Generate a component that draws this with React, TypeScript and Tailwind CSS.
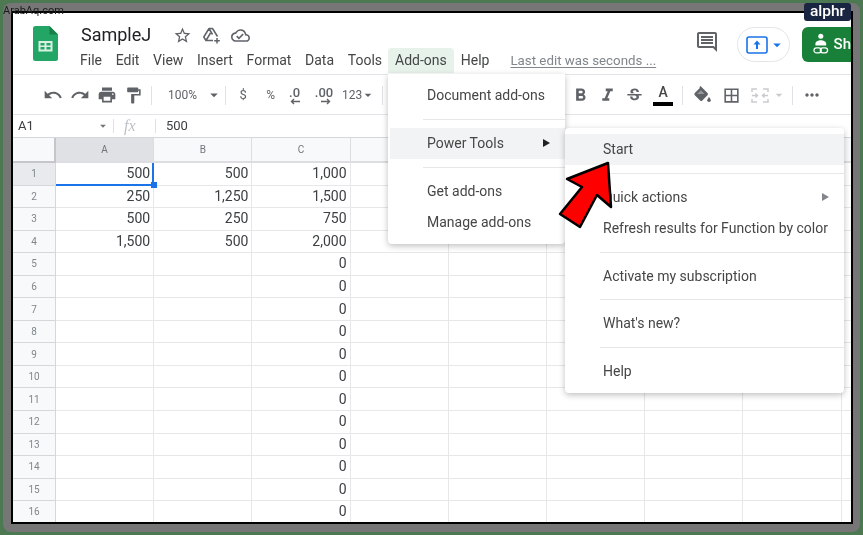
import type { ReactNode } from "react";
import {
  MdUndo,
  MdRedo,
  MdPrint,
  MdFormatPaint,
  MdFormatBold,
  MdFormatItalic,
  MdStrikethroughS,
  MdBorderAll,
  MdMoreHoriz,
  MdStarBorder,
  MdOutlineCloudDone,
  MdOutlineComment,
  MdArrowDropDown,
} from "react-icons/md";

const MENUS = ["File", "Edit", "View", "Insert", "Format", "Data", "Tools"];
const COLS = ["A", "B", "C", "", "", "", "", "", ""];

const ROWS: string[][] = [
  ["500", "500", "1,000"],
  ["250", "1,250", "1,500"],
  ["500", "250", "750"],
  ["1,500", "500", "2,000"],
];

function SheetsLogo() {
  return (
    <svg width="25" height="35" viewBox="0 0 25 35">
      <path d="M2.5 0H16.5l8.5 8.5v24a2.5 2.5 0 0 1-2.5 2.5h-20A2.5 2.5 0 0 1 0 32.5v-30A2.5 2.5 0 0 1 2.5 0z" fill="#23a566" />
      <path d="M16.5 0l8.5 8.5h-8.5z" fill="#188049" />
      <path d="M5.5 15h14v10.5h-14z" fill="#d9f0e3" />
      <path d="M7.5 17h4v2.5h-4zM13.5 17h4v2.5h-4zM7.5 21h4v2.5h-4zM13.5 21h4v2.5h-4z" fill="#23a566" />
    </svg>
  );
}

function DriveAdd() {
  return (
    <svg width="19" height="19" viewBox="0 0 19 19" fill="none" stroke="#5f6368" strokeWidth="1.5" strokeLinejoin="round">
      <path d="M7 2.5h3.5l5 8M7 2.5L1.8 11l2.2 3.5h7M7 2.5l3.5 6M4 14.5L8.5 7" />
      <path d="M15 12v5.5M12.2 14.8h5.6" />
    </svg>
  );
}

function FillBucket() {
  return (
    <svg width="20" height="18" viewBox="0 0 20 18" fill="#5f6368">
      <path d="M8.5 1l1-1 7 7a1.6 1.6 0 0 1 0 2.2l-5.2 5.2a1.6 1.6 0 0 1-2.2 0L3.8 9.2a1.6 1.6 0 0 1 0-2.2l5-5z" />
      <path d="M9.9 4.2L6 8h7.6z" fill="#fff" opacity="0.35" />
      <path d="M18 11s-1.8 2-1.8 3.2a1.8 1.8 0 0 0 3.6 0C19.8 13 18 11 18 11z" />
    </svg>
  );
}

function MergeCells() {
  return (
    <svg width="18" height="15" viewBox="0 0 18 15" fill="none" stroke="#c9cbce" strokeWidth="1.5">
      <path d="M1 4V1h5M12 1h5v3M1 11v3h5M12 14h5v-3" />
      <path d="M1 7.5h5M4.5 5.5l2 2-2 2M17 7.5h-5M13.5 5.5l-2 2 2 2" />
    </svg>
  );
}

function ShareIcon() {
  return (
    <svg width="16" height="24" viewBox="0 0 16 24" fill="#fff">
      <circle cx="8" cy="3" r="2.6" />
      <path d="M2.5 12.5v-2c0-2 3-3.3 5.500-3.300s5.500 1.300 5.500 3.300v2z" />
      <g fill="none" stroke="#fff" strokeWidth="1.3">
        <rect x="1" y="15" width="7.5" height="5" rx="2.5" />
        <rect x="7.5" y="15" width="7.5" height="5" rx="2.5" />
      </g>
    </svg>
  );
}

function DecimalArrow({ dir }: { dir: "left" | "right" }) {
  return (
    <svg className="absolute top-[16px]" style={dir === "left" ? { left: 4 } : { left: 7 }} width="10" height="7" viewBox="0 0 10 7" fill="none" stroke="#5f6368" strokeWidth="1.4">
      {dir === "left" ? <path d="M10 3.5H1.5M4 1L1.5 3.5 4 6" /> : <path d="M0 3.5h8.500M6 1l2.500 2.500L6 6" />}
    </svg>
  );
}

function ToolIcon({ children, w = 27 }: { children: ReactNode; w?: number }) {
  return (
    <div className="flex h-full shrink-0 items-center justify-center text-[#5f6368]" style={{ width: w }}>
      {children}
    </div>
  );
}

function ToolSep({ className = "mx-[5px]" }: { className?: string }) {
  return <div className={`h-[19px] w-px shrink-0 bg-[#dfe1e4] ${className}`} />;
}

function Header() {
  return (
    <div className="flex h-[62px] shrink-0 border-b border-[#e3e5e8]">
      <div className="ml-[20px] mt-[13px] shrink-0">
        <SheetsLogo />
      </div>
      <div className="ml-[22px] flex flex-1 flex-col">
        <div className="mt-[10px] flex h-[24px] items-center text-[#3c4043]">
          <span className="ml-[1px] text-[18px] leading-none text-[#202124]">SampleJ</span>
          <MdStarBorder className="ml-[22px] text-[#5f6368]" size={19} />
          <span className="ml-[10px]">
            <DriveAdd />
          </span>
          <MdOutlineCloudDone className="ml-[10px] text-[#5f6368]" size={19} />
        </div>
        <div className="mt-[1px] flex h-[25px] items-center text-[14px] text-[#444746]">
          <div className="flex">
            {MENUS.map((m) => (
              <span key={m} className="mr-[13.7px]">
                {m}
              </span>
            ))}
          </div>
          <span className="-ml-[7.7px] flex h-[25px] items-center rounded-t bg-[#e6f2ea] px-[7px]">Add-ons</span>
          <span className="ml-[7px]">Help</span>
          <span className="ml-[21px] text-[13.3px] text-[#80868b] underline underline-offset-2">Last edit was seconds ...</span>
        </div>
      </div>
      <div className="flex items-start">
        <MdOutlineComment className="mt-[17px] text-[#5f6368]" size={24} />
        <div className="ml-[18px] mt-[14px] flex h-[35px] w-[53px] items-center justify-center rounded-full border border-[#e3e5e8]">
          <svg width="22" height="18" viewBox="0 0 22 18">
            <rect x="1" y="1" width="20" height="16" rx="2" fill="none" stroke="#1a73e8" strokeWidth="1.6" />
            <path d="M11 4.5l3.5 4H12V13h-2V8.5H7.5z" fill="#1a73e8" />
          </svg>
          <MdArrowDropDown className="-mr-[4px] text-[#1a73e8]" size={18} />
        </div>
        <div className="ml-[12px] mt-[14px] flex h-[35px] w-[49px] items-center rounded-l-md bg-[#188038] pl-[11px] text-[15px] font-medium text-white">
          <ShareIcon />
          <span className="ml-[5px]">Sh</span>
        </div>
      </div>
    </div>
  );
}

function Toolbar() {
  return (
    <div className="flex h-[40px] shrink-0 items-center border-b border-[#e3e5e8] pt-[1px] pl-[26px]">
      <ToolIcon><MdUndo size={20} /></ToolIcon>
      <ToolIcon><MdRedo size={20} /></ToolIcon>
      <ToolIcon><MdPrint size={20} /></ToolIcon>
      <ToolIcon><MdFormatPaint size={19} /></ToolIcon>
      <ToolSep className="ml-[4px] mr-[16px]" />
      <span className="text-[12px] text-[#5f6368]">100%</span>
      <MdArrowDropDown className="ml-[8px] text-[#5f6368]" size={18} />
      <ToolSep className="ml-[2px] mr-[11px]" />
      <span className="w-[12px] text-center text-[13px] text-[#5f6368]">$</span>
      <span className="ml-[15px] w-[13px] text-center text-[12px] text-[#5f6368]">%</span>
      <div className="relative ml-[9px] h-[26px] w-[17px] text-center text-[13px] leading-[22px] font-medium text-[#5f6368]">
        .0
        <DecimalArrow dir="left" />
      </div>
      <div className="relative ml-[11px] h-[26px] w-[20px] text-center text-[13px] leading-[22px] font-medium text-[#5f6368]">
        .00
        <DecimalArrow dir="right" />
      </div>
      <span className="ml-[8px] text-[12px] text-[#5f6368]">123</span>
      <MdArrowDropDown className="-ml-[2px] text-[#5f6368]" size={16} />
      <ToolSep className="ml-[6px] mr-[184px]" />
      <ToolIcon><MdFormatBold size={21} /></ToolIcon>
      <ToolIcon><MdFormatItalic size={21} /></ToolIcon>
      <ToolIcon><MdStrikethroughS size={19} /></ToolIcon>
      <div className="ml-[1px] flex w-[28px] flex-col items-center text-[#444746]">
        <span className="text-[14px] leading-[16px] font-medium">A</span>
        <div className="mt-[2px] h-[4px] w-[20px] bg-black" />
      </div>
      <ToolSep className="ml-[5px] mr-[4px]" />
      <ToolIcon><FillBucket /></ToolIcon>
      <ToolIcon w={34}><MdBorderAll size={19} /></ToolIcon>
      <div className="-ml-[2px]">
        <ToolIcon w={27}><MergeCells /></ToolIcon>
      </div>
      <MdArrowDropDown className="-ml-[2px] text-[#c9cbce]" size={16} />
      <ToolSep className="ml-[5px] mr-[5px]" />
      <ToolIcon><MdMoreHoriz size={20} /></ToolIcon>
    </div>
  );
}

function FormulaBar() {
  return (
    <div className="flex h-[23px] shrink-0 items-center border-b border-[#d5d7da] text-[13px] text-[#3c4043]">
      <span className="ml-[5px] w-[78px]">A1</span>
      <MdArrowDropDown className="text-[#70757a]" size={14} />
      <div className="ml-[3px] h-[14px] w-px bg-[#dfe1e4]" />
      <span
        className="ml-[10px] w-[31px] text-[16px] text-[#bdc1c6] italic"
        style={{ fontFamily: '"Liberation Serif", serif' }}
      >
        fx
      </span>
      <div className="h-[14px] w-px bg-[#dfe1e4]" />
      <span className="ml-[10px]">500</span>
    </div>
  );
}

function Grid() {
  const rows = Array.from({ length: 16 }, (_, i) => i);
  return (
    <div className="relative flex-1 overflow-hidden">
      <div className="grid grid-cols-[43px_repeat(8,98.2px)_11px] grid-rows-[25px_repeat(16,22.55px)]">
        <div className="border-r-[2px] border-b-[2px] border-[#c4c6c9] bg-[#f8f9fa]" />
        {COLS.map((c, i) => (
          <div
            key={i}
            className={`flex items-center justify-center border-r border-b-[2px] border-[#dcdee1] text-[10px] text-[#70757a] ${i === 0 ? "bg-[#dfe1e5]" : "bg-[#f8f9fa]"}`}
          >
            {c}
          </div>
        ))}
        {rows.map((r) => (
          <div key={r} className="contents">
            <div
              className={`flex items-center justify-center border-r border-b border-[#d5d7da] text-[10px] text-[#80868b] ${r === 0 ? "bg-[#e8eaed]" : "bg-[#f8f9fa]"}`}
            >
              {r + 1}
            </div>
            {COLS.map((_, c) => (
              <div
                key={c}
                className="flex items-center justify-end border-r border-b border-[#e6e7e9] pr-[3px] text-[14px] text-[#3c4043]"
              >
                {c < 3 ? (ROWS[r]?.[c] ?? (c === 2 ? "0" : "")) : ""}
              </div>
            ))}
          </div>
        ))}
      </div>
      {/* active cell A1 */}
      <div className="absolute left-[43px] top-[25px] h-[23px] w-[98px] border-r-2 border-b-2 border-[#1a73e8]" />
      <div className="absolute left-[138px] top-[44px] h-[6px] w-[6px] bg-[#1a73e8]" />
    </div>
  );
}

function MenuRow({ label, active, arrow, pad = "pl-[39px]" }: { label: string; active?: boolean; arrow?: string; pad?: string }) {
  return (
    <div className={`flex h-[31px] items-center justify-between ${pad} ${active ? "bg-[#f1f3f4]" : ""}`}>
      <span>{label}</span>
      {arrow && (
        <span className="mr-[15px] h-0 w-0 border-y-[4px] border-l-[7px] border-y-transparent" style={{ borderLeftColor: arrow }} />
      )}
    </div>
  );
}

function MenuSep({ className = "ml-[35px]" }: { className?: string }) {
  return <div className={`my-[7.9px] h-px bg-[#e6e7e9] ${className}`} />;
}

function AddonsMenu() {
  return (
    <div className="absolute left-[375px] top-[61px] w-[177px] rounded-b bg-white py-[6px] text-[14px] text-[#444746] shadow-[0_2px_6px_rgba(0,0,0,0.25)]">
      <MenuRow label="Document add-ons" />
      <MenuSep />
      <div className="pl-[2px]">
        <MenuRow label="Power Tools" active arrow="#202124" pad="pl-[37px]" />
      </div>
      <MenuSep />
      <MenuRow label="Get add-ons" />
      <MenuRow label="Manage add-ons" />
    </div>
  );
}

function ToolsMenu() {
  return (
    <div className="absolute left-[552px] top-[115px] w-[279px] rounded-sm bg-white py-[6px] text-[14px] text-[#444746] shadow-[0_2px_6px_rgba(0,0,0,0.25)]">
      <MenuRow label="Start" active pad="pl-[38px]" />
      <MenuSep />
      <MenuRow label="Quick actions" arrow="#80868b" pad="pl-[38px]" />
      <MenuRow label="Refresh results for Function by color" pad="pl-[38px]" />
      <MenuSep />
      <MenuRow label="Activate my subscription" pad="pl-[38px]" />
      <MenuSep />
      <MenuRow label="What's new?" pad="pl-[38px]" />
      <MenuSep />
      <MenuRow label="Help" pad="pl-[38px]" />
    </div>
  );
}

function RedArrow() {
  return (
    <svg className="absolute left-[0px] top-[0px]" width="863" height="535" viewBox="0 0 863 535">
      <polygon
        points="608,163 611,207 597,195 580,227 560,214 582,187 567,179"
        fill="#fe0000"
        stroke="#000"
        strokeWidth="2.5"
        strokeLinejoin="round"
      />
    </svg>
  );
}

export default function App() {
  return (
    <div
      className="relative h-[535px] w-[863px] overflow-hidden bg-[#4c7852] p-[3px] blur-[0.3px]"
      style={{ fontFamily: 'Roboto, "Liberation Sans", sans-serif' }}
    >
      <div className="h-[529px] w-[857px] rounded-[8px] bg-[#767676] pt-[8px] pr-[7px] pb-[8px] pl-[8px]">
        <div className="relative flex h-[513px] flex-col overflow-hidden border-2 border-black bg-white">
          <Header />
          <Toolbar />
          <FormulaBar />
          <Grid />
          <AddonsMenu />
          <ToolsMenu />
        </div>
      </div>
      <RedArrow />
      <div className="absolute left-[3px] top-[4px] text-[11px] leading-[14px] text-[#1b1b1b]">ArabAq.com</div>
      <div className="absolute left-[804px] top-[3px] flex h-[18px] w-[47px] items-center justify-center rounded-[3px] bg-[#1a2542] text-[15.5px] leading-none font-medium text-white">
        alphr
      </div>
    </div>
  );
}
